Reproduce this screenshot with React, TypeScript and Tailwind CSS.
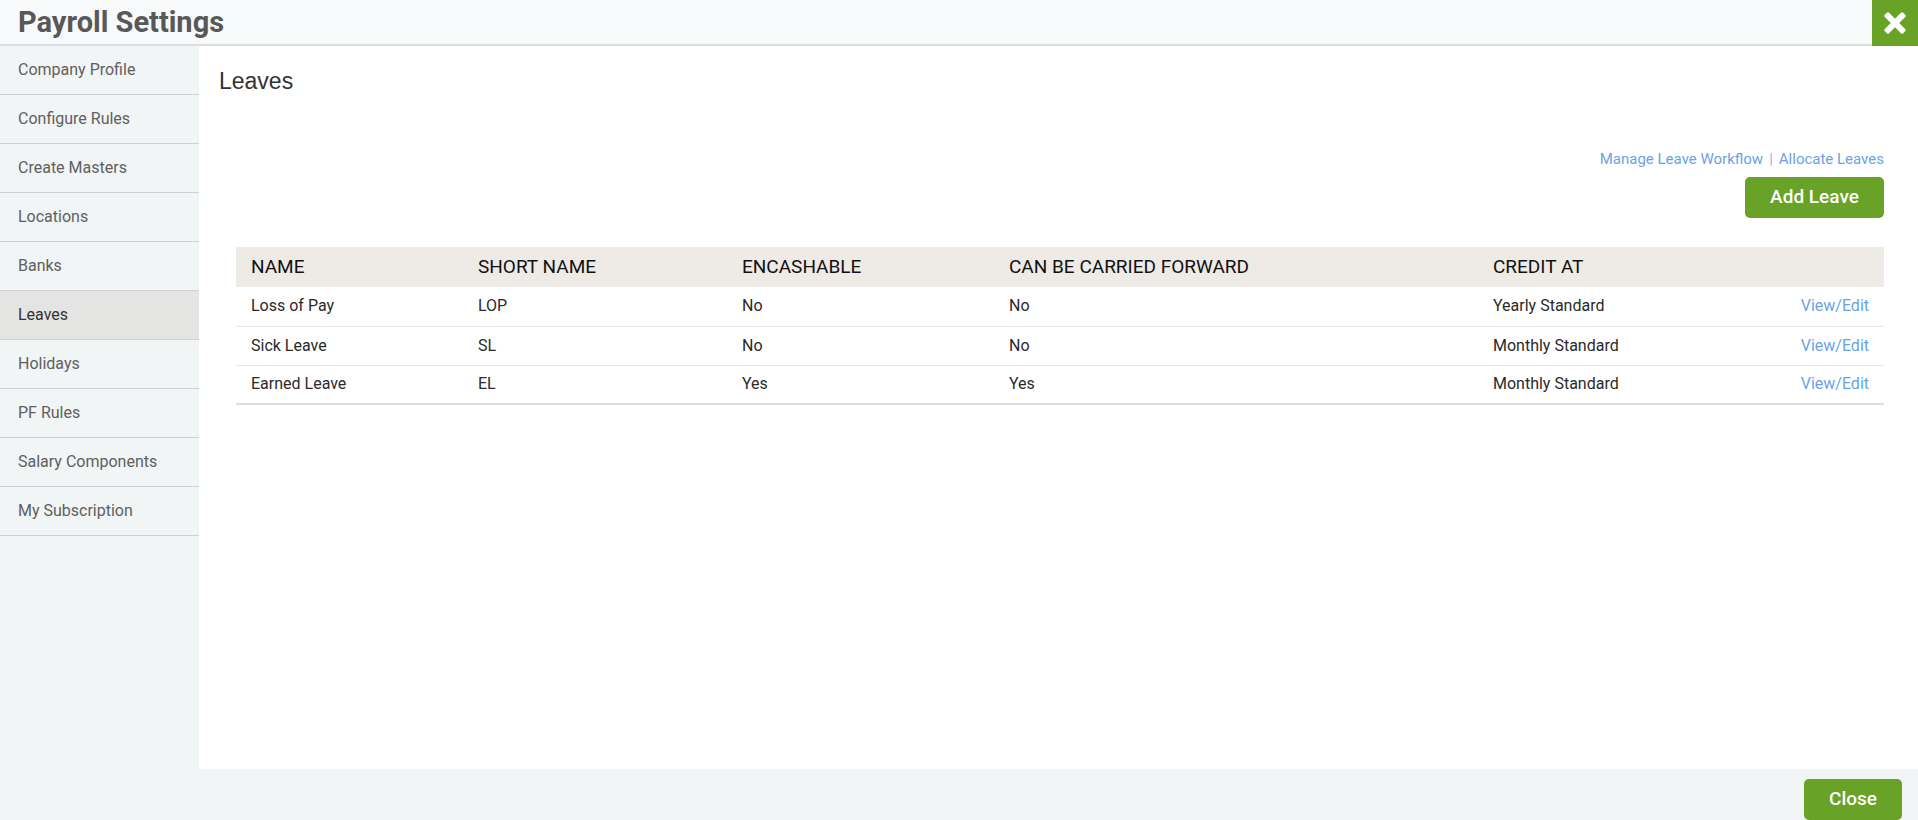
import React from "react";

const menu = [
  "Company Profile",
  "Configure Rules",
  "Create Masters",
  "Locations",
  "Banks",
  "Leaves",
  "Holidays",
  "PF Rules",
  "Salary Components",
  "My Subscription",
];

const leaves = [
  { name: "Loss of Pay", short: "LOP", encash: "No", carry: "No", credit: "Yearly Standard" },
  { name: "Sick Leave", short: "SL", encash: "No", carry: "No", credit: "Monthly Standard" },
  { name: "Earned Leave", short: "EL", encash: "Yes", carry: "Yes", credit: "Monthly Standard" },
];

function CloseIcon() {
  return (
    <svg width="22" height="22" viewBox="0 0 22 22">
      <rect x="-2" y="8" width="26" height="6" rx="1.6" fill="#fff" transform="rotate(45 11 11)" />
      <rect x="-2" y="8" width="26" height="6" rx="1.6" fill="#fff" transform="rotate(-45 11 11)" />
    </svg>
  );
}

export default function App() {
  const active = "Leaves";

  return (
    <div className="flex h-[830px] flex-col bg-[#f1f5f6] font-['Roboto',sans-serif]">
      {/* Header */}
      <div className="flex h-[46px] shrink-0">
        <div className="flex flex-1 items-center border-b-2 border-[#dcdddd] bg-[#f8f9fa] pl-[18px]">
          <h1 className="text-[29px] leading-none font-bold text-[#585858]">Payroll Settings</h1>
        </div>
        <button className="flex h-[46px] w-[46px] items-center justify-center bg-[#68a226]">
          <CloseIcon />
        </button>
      </div>

      {/* Body */}
      <div className="flex min-h-0 flex-1">
        <nav className="w-[199px] shrink-0">
          {menu.map((item) => (
            <div
              key={item}
              className={
                item === active
                  ? "flex h-[49px] items-center border-b border-[#cfd1d1] bg-[#e4e4e2] pl-[18px] text-[16px] text-[#333333]"
                  : "flex h-[49px] items-center border-b border-[#cfd1d1] pl-[18px] text-[16px] text-[#606060]"
              }
            >
              {item}
            </div>
          ))}
        </nav>

        <main className="flex-1 bg-white pt-[24px] pr-[34px] pl-[20px]">
          <h2 className="font-['Liberation_Sans',Arial,sans-serif] text-[23px] leading-[22px] text-[#333333]">
            Leaves
          </h2>

          <div className="mt-[58px] ml-[17px]">
            <div className="flex justify-end text-[15px] leading-[18px] text-[#6aa3e6]">
              <a href="#">Manage Leave Workflow</a>
              <span className="mx-[6px] text-[#8ab6ea]">|</span>
              <a href="#">Allocate Leaves</a>
            </div>
            <div className="mt-[9px] flex justify-end">
              <button className="h-[41px] w-[139px] rounded-[5px] bg-[#68a226] text-[19px] font-medium text-white">
                Add Leave
              </button>
            </div>

            <table className="mt-[29px] w-full table-fixed border-collapse border-b-2 border-[#dddddd]">
              <colgroup>
                <col className="w-[227px]" />
                <col className="w-[264px]" />
                <col className="w-[267px]" />
                <col className="w-[484px]" />
                <col className="w-[260px]" />
                <col />
              </colgroup>
              <thead>
                <tr className="h-[40px] bg-[#eeeae6] text-left text-[19px] text-[#111111]">
                  <th className="pl-[15px] font-normal">NAME</th>
                  <th className="pl-[15px] font-normal">SHORT NAME</th>
                  <th className="pl-[15px] font-normal">ENCASHABLE</th>
                  <th className="pl-[15px] font-normal">CAN BE CARRIED FORWARD</th>
                  <th className="pl-[15px] font-normal">CREDIT AT</th>
                  <th />
                </tr>
              </thead>
              <tbody>
                {leaves.map((l, i) => (
                  <tr
                    key={l.short}
                    className={
                      i < leaves.length - 1
                        ? "h-[39px] border-b border-[#e8e6e3] text-[16px] text-[#2a2a2a]"
                        : "h-[39px] text-[16px] text-[#2a2a2a]"
                    }
                  >
                    <td className="pl-[15px]">{l.name}</td>
                    <td className="pl-[15px]">{l.short}</td>
                    <td className="pl-[15px]">{l.encash}</td>
                    <td className="pl-[15px]">{l.carry}</td>
                    <td className="pl-[15px]">{l.credit}</td>
                    <td className="pr-[15px] text-right">
                      <a href="#" className="text-[#6aa3e6]">
                        View/Edit
                      </a>
                    </td>
                  </tr>
                ))}
              </tbody>
            </table>
          </div>
        </main>
      </div>

      {/* Footer */}
      <div className="flex h-[61px] shrink-0 items-start justify-end py-[10px] pr-[16px]">
        <button className="h-[41px] w-[98px] rounded-[5px] bg-[#68a226] text-[19px] font-medium text-white">
          Close
        </button>
      </div>
    </div>
  );
}
